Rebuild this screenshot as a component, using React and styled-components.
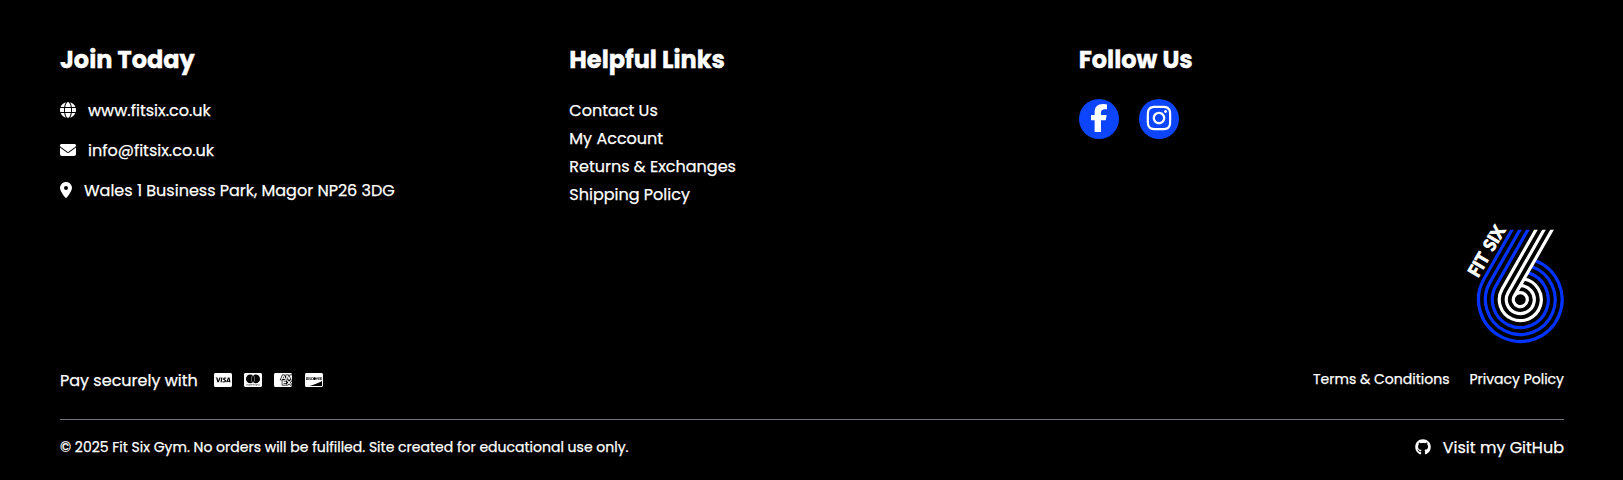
import React from "react";
import styled, { createGlobalStyle } from "styled-components";
import {
  FaGlobe, FaEnvelope, FaLocationDot, FaFacebookF, FaInstagram,
  FaCcVisa, FaCcMastercard, FaCcAmex, FaCcDiscover, FaGithub,
} from "react-icons/fa6";

const GlobalStyle = createGlobalStyle`
  * { box-sizing: border-box; }
  body { margin: 0; background: #000; }
`;

const Footer = styled.footer`
  display: flex;
  flex-direction: column;
  height: 480px;
  padding: 42px 59px 0 60px;
  background: #000;
  color: #fff;
  font-family: Poppins, Inter, sans-serif;
  font-size: 16px;
  -webkit-text-stroke: 0.25px #fff;
`;

const Columns = styled.div`
  display: grid;
  grid-template-columns: repeat(3, 1fr);
  column-gap: 24px;
  height: 181px;
`;

const Column = styled.section`
  min-width: 0;
`;

const Heading = styled.h2`
  margin: 0;
  font-size: 24px;
  font-weight: 700;
  line-height: 36px;
  -webkit-text-stroke: 0.4px #fff;
`;

const List = styled.ul`
  list-style: none;
  margin: ${(p) => p.$top}px 0 0;
  padding: 0;
  line-height: ${(p) => p.$line}px;
`;

const IconLine = styled.li`
  display: flex;
  align-items: center;
  gap: 12px;

  svg {
    flex: none;
    width: ${(p) => p.$iconWidth}px;
    margin-bottom: 2px;
  }
`;

const SocialRow = styled.div`
  display: flex;
  gap: 20px;
  margin-top: 21px;
`;

const SocialButton = styled.a`
  display: flex;
  align-items: center;
  justify-content: center;
  width: 40px;
  height: 40px;
  padding-bottom: 2px;
  border-radius: 50%;
  background: #0d45fd;
  color: #fff;
  font-size: 28px;
`;

const LogoRow = styled.div`
  display: flex;
  justify-content: flex-end;
  height: 137px;
`;

const LogoArt = styled.svg`
  margin-top: -8px;
  -webkit-text-stroke: 0;
`;

const LegalRow = styled.div`
  display: flex;
  justify-content: space-between;
  height: 60px;
  border-bottom: 1px solid #6c757d;
`;

const Payment = styled.div`
  display: flex;
  gap: 15.9px;
  line-height: 42px;
`;

const Cards = styled.div`
  display: flex;
  align-items: center;
  gap: 12.4px;
  height: 40px;
`;

const LegalLinks = styled.nav`
  display: flex;
  gap: 20px;
  font-size: 14px;
  line-height: 38px;
`;

const BottomRow = styled.div`
  display: flex;
  justify-content: space-between;
  line-height: 54px;
`;

const Copyright = styled.div`
  font-size: 14px;
`;

const GitHubLink = styled.a`
  display: flex;
  align-items: center;
  gap: 12px;
  line-height: 56px;

  svg {
    margin-bottom: 2px;
  }
`;

const CX = 65.3;
const CY = 84.6;
const rings = [
  { r: 41.8, color: "#0033ff" },
  { r: 34.9, color: "#0033ff" },
  { r: 28, color: "#0033ff" },
  { r: 21, color: "#fff" },
  { r: 14, color: "#fff" },
  { r: 7, color: "#fff" },
];

// Each stripe runs down the 60° diagonal, then wraps round the centre until it meets the innermost stripe.
const stripe = (r) => {
  const tx = CX - 0.866 * r;
  const ty = CY - 0.5 * r;
  const topX = tx + (ty - 12) * 0.57;
  if (r === 7) return `M${topX} 12L${tx} ${ty}A7 7 0 1 0 ${CX} ${CY - 7}A7 7 0 0 0 ${tx} ${ty}`;
  const t = Math.sqrt(r * r - 49);
  const ex = CX - 0.866 * 7 + 0.5 * t;
  const ey = CY - 3.5 - 0.866 * t;
  return `M${topX} 12L${tx} ${ty}A${r} ${r} 0 1 0 ${ex} ${ey}`;
};

function Logo() {
  return (
    <LogoArt width="109" height="135" viewBox="0 0 109 135">
      <defs>
        <clipPath id="flat-top"><rect x="0" y="14.7" width="120" height="125" /></clipPath>
      </defs>
      <g clipPath="url(#flat-top)" fill="none" strokeWidth="3.2">
        {rings.map(({ r, color }) => <path key={r} d={stripe(r)} stroke={color} />)}
      </g>
      <text
        transform="translate(23 63.3) rotate(-60)"
        fill="#fff" stroke="#fff" strokeWidth="0.8" wordSpacing="2.5"
        fontFamily="Lato, sans-serif" fontSize="17.5" fontWeight="900"
        textLength="55.5" lengthAdjust="spacingAndGlyphs"
      >
        FIT SIX
      </text>
    </LogoArt>
  );
}

const contacts = [
  { Icon: FaGlobe, width: 16, text: "www.fitsix.co.uk" },
  { Icon: FaEnvelope, width: 16, text: "info@fitsix.co.uk" },
  { Icon: FaLocationDot, width: 12, text: "Wales 1 Business Park, Magor NP26 3DG" },
];
const links = ["Contact Us", "My Account", "Returns & Exchanges", "Shipping Policy"];
const cards = [FaCcVisa, FaCcMastercard, FaCcAmex, FaCcDiscover];

export default function App() {
  return (
    <>
      <GlobalStyle />
      <Footer>
        <Columns>
          <Column>
            <Heading>Join Today</Heading>
            <List $top={13} $line={40}>
              {contacts.map(({ Icon, width, text }) => (
                <IconLine key={text} $iconWidth={width}><Icon /><span>{text}</span></IconLine>
              ))}
            </List>
          </Column>
          <Column>
            <Heading>Helpful Links</Heading>
            <List $top={19} $line={28}>
              {links.map((text) => <li key={text}>{text}</li>)}
            </List>
          </Column>
          <Column>
            <Heading>Follow Us</Heading>
            <SocialRow>
              <SocialButton><FaFacebookF /></SocialButton>
              <SocialButton><FaInstagram /></SocialButton>
            </SocialRow>
          </Column>
        </Columns>
        <LogoRow><Logo /></LogoRow>
        <LegalRow>
          <Payment>
            <span>Pay securely with</span>
            <Cards>{cards.map((Card, i) => <Card key={i} size={18} />)}</Cards>
          </Payment>
          <LegalLinks>
            <span>Terms &amp; Conditions</span>
            <span>Privacy Policy</span>
          </LegalLinks>
        </LegalRow>
        <BottomRow>
          <Copyright>© 2025 Fit Six Gym. No orders will be fulfilled. Site created for educational use only.</Copyright>
          <GitHubLink><FaGithub /><span>Visit my GitHub</span></GitHubLink>
        </BottomRow>
      </Footer>
    </>
  );
}
